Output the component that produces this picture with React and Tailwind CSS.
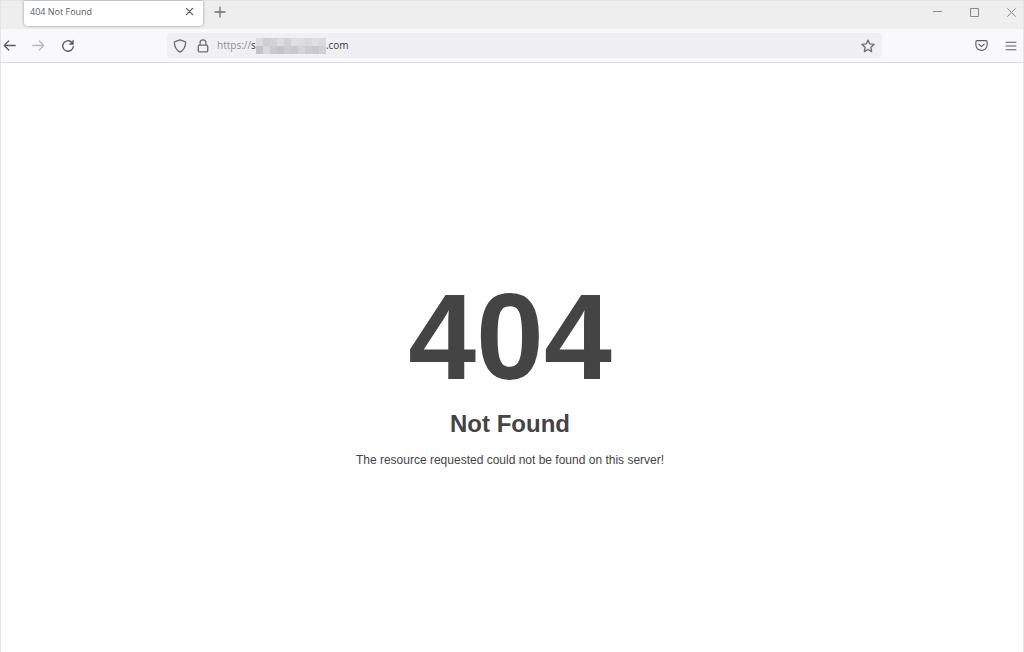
import React, { useState } from 'react';

const MOSAIC = [
  'bg-[#dcdbe0]', 'bg-[#cfced4]', 'bg-[#d3d2d8]', 'bg-[#dddce1]', 'bg-[#d2d1d7]', 'bg-[#dfdee3]', 'bg-[#dddce2]', 'bg-[#d9d8de]', 'bg-[#e0dfe4]', 'bg-[#dad9de]',
  'bg-[#c4c3c9]', 'bg-[#d9d8dd]', 'bg-[#cac9cf]', 'bg-[#c6c5cb]', 'bg-[#cccbd1]', 'bg-[#c9c8ce]', 'bg-[#d5d4da]', 'bg-[#cccbd0]', 'bg-[#c8c7cd]', 'bg-[#d0cfd5]',
];

function Icon({ size = 16, strokeWidth = 1.3, className = '', children }) {
  return (
    <svg
      width={size}
      height={size}
      viewBox="0 0 16 16"
      fill="none"
      stroke="currentColor"
      strokeWidth={strokeWidth}
      strokeLinecap="round"
      strokeLinejoin="round"
      className={className}
      aria-hidden="true"
    >
      {children}
    </svg>
  );
}

function IconButton({ label, className = '', disabled, children }) {
  return (
    <button
      type="button"
      aria-label={label}
      disabled={disabled}
      className={`flex h-[22px] items-center justify-center ${className}`}
    >
      {children}
    </button>
  );
}

function TabStrip() {
  return (
    <div className="flex h-7 items-start bg-[#eeeeef] pl-[23px]">
      <div className="flex h-[25px] w-[179px] items-center justify-between rounded-b-sm bg-white pr-1 pb-1 pl-1.5 shadow-[0_0_3px_rgba(0,0,0,0.4)]">
        <span className="text-[9px] text-[#5b5b66]">404 Not Found</span>
        <IconButton label="Close tab" className="w-5 text-[#5b5b66]">
          <Icon size={9} strokeWidth={2.2}>
            <path d="M2.5 2.5l11 11M13.5 2.5l-11 11" />
          </Icon>
        </IconButton>
      </div>
      <IconButton label="New tab" className="ml-1.5 w-[22px] text-[#6b6b75]">
        <Icon size={12} strokeWidth={1.7}>
          <path d="M8 1.5v13M1.5 8h13" />
        </Icon>
      </IconButton>

      <div className="ml-auto flex gap-[13px] text-[#8b8b8f]">
        <IconButton label="Minimize" className="w-6">
          <svg width="9" height="9" viewBox="0 0 9 9" fill="none" stroke="currentColor">
            <path d="M0 3.5h9" />
          </svg>
        </IconButton>
        <IconButton label="Maximize" className="w-6">
          <svg width="9" height="9" viewBox="0 0 9 9" fill="none" stroke="currentColor">
            <path d="M.5.5h8v8h-8z" />
          </svg>
        </IconButton>
        <IconButton label="Close window" className="w-6">
          <svg width="9" height="9" viewBox="0 0 9 9" fill="none" stroke="currentColor">
            <path d="M.3.3l8.4 8.4M8.7.3L.3 8.7" />
          </svg>
        </IconButton>
      </div>
    </div>
  );
}

function AddressBar() {
  const [host, setHost] = useState('.com');

  return (
    <div className="flex h-[25px] flex-1 items-center rounded-sm bg-[#f0f0f4] px-1.5 text-[#6b6b75]">
      <IconButton label="Tracking protection" className="w-3.5">
        <Icon size={14} strokeWidth={1.5}>
          <path d="M8 1l5.6 2.1c.5.2.8.5.8 1 0 4.6-2.1 8.6-6.4 10.9C3.7 12.7 1.6 8.7 1.6 4.1c0-.5.3-.8.8-1z" />
        </Icon>
      </IconButton>
      <IconButton label="Site information" className="ml-2 w-4">
        <Icon size={14} strokeWidth={1.5}>
          <rect x="2.6" y="7" width="10.8" height="7.8" rx="1.5" />
          <path d="M4.6 7V4.5a3.4 3.4 0 0 1 6.8 0V7" />
        </Icon>
      </IconButton>
      <label htmlFor="address" className="ml-1.5 flex items-center text-[10px]">
        <span className="text-[#8f8f98]">https://</span>
        <span className="text-[#3a3a44]">s</span>
        <span className="grid h-4 w-[70px] grid-cols-10 grid-rows-2">
          {MOSAIC.map((color, i) => (
            <span key={i} className={color} />
          ))}
        </span>
      </label>
      <input
        id="address"
        type="text"
        value={host}
        onChange={(e) => setHost(e.target.value)}
        className="min-w-0 flex-1 bg-transparent text-[10px] text-[#3a3a44] outline-none"
      />
      <IconButton label="Bookmark this page" className="w-4">
        <Icon size={14} strokeWidth={1.5}>
          <path d="M8 1.2l2 4.4 4.9.6-3.6 3.3.9 4.9L8 12l-4.2 2.400.9-4.900L1.100 6.200l4.900-.6z" />
        </Icon>
      </IconButton>
    </div>
  );
}

function Toolbar() {
  return (
    <div className="flex h-[34px] items-center border-b border-[#dcdce0] bg-[#f9f9fb] text-[#5b5b66]">
      <div className="flex w-[166px] items-center gap-3">
        <IconButton label="Back" className="w-[17px]">
          <Icon size={13} strokeWidth={1.6}>
            <path d="M15 8H1.5M7 2.5L1.5 8 7 13.5" />
          </Icon>
        </IconButton>
        <IconButton label="Forward" disabled className="w-[17px] text-[#b8b8bf]">
          <Icon size={13} strokeWidth={1.6}>
            <path d="M1 8h13.5M9 2.5L14.5 8 9 13.5" />
          </Icon>
        </IconButton>
        <IconButton label="Reload" className="w-[17px]">
          <Icon size={14} strokeWidth={1.5}>
            <path d="M14 8.5a6 6 0 1 1-2-5" />
            <path d="M14.2 1.5v4.7H9.5z" fill="currentColor" strokeWidth="0.6" />
          </Icon>
        </IconButton>
      </div>
      <AddressBar />
      <div className="flex w-[141px] items-center justify-end gap-3.5 pr-1">
        <IconButton label="Save to Pocket" className="w-4">
          <Icon size={13} strokeWidth={1.4}>
            <path d="M2.5 2h11c.8 0 1.4.6 1.4 1.4V7.5a6.9 6.5 0 0 1-13.8 0V3.4C1.1 2.6 1.7 2 2.5 2z" />
            <path d="M4.7 6.3L8 9.4l3.3-3.1" />
          </Icon>
        </IconButton>
        <IconButton label="Open application menu" className="w-4">
          <Icon size={12} strokeWidth={1.6}>
            <path d="M1.5 3h13M1.5 8h13M1.5 13h13" />
          </Icon>
        </IconButton>
      </div>
    </div>
  );
}

function App() {
  return (
    <div className="flex min-h-screen flex-col border-x border-t border-[#e4e4e6] bg-white font-['Open_Sans','Noto_Sans',sans-serif]">
      <header>
        <TabStrip />
        <Toolbar />
      </header>
      <main className="flex flex-1 flex-col items-center justify-center pt-7 pr-1 text-center font-['Liberation_Sans',Arial,sans-serif] text-[#444444]">
        <h1 className="text-[122px] leading-[122px] font-bold">404</h1>
        <h2 className="mt-2.5 text-2xl font-bold">Not Found</h2>
        <p className="mt-3 text-xs">The resource requested could not be found on this server!</p>
      </main>
    </div>
  );
}

export default App;
